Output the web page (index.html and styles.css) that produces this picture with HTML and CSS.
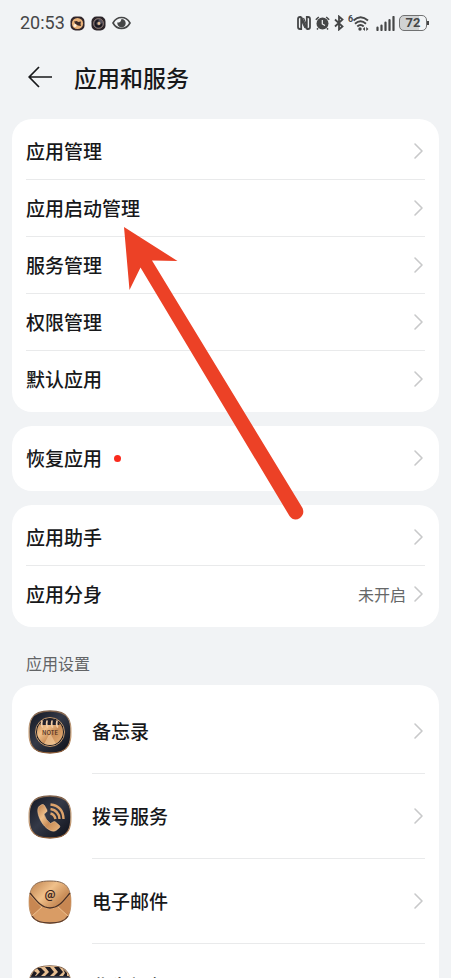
FILE: index.html
```
<!DOCTYPE html>
<html lang="zh-CN">
<head>
  <meta charset="UTF-8">
  <meta name="viewport" content="width=device-width, initial-scale=1.0">
  <title>应用和服务</title>
  <link rel="stylesheet" href="styles.css">
</head>
<body>
  <svg class="defs" width="0" height="0" aria-hidden="true">
    <defs>
      <linearGradient id="gold" x1="0" y1="0" x2="1" y2="1">
        <stop offset="0" stop-color="#b87c4a"/>
        <stop offset="0.35" stop-color="#f0c08a"/>
        <stop offset="0.6" stop-color="#c98d58"/>
        <stop offset="1" stop-color="#e8b47c"/>
      </linearGradient>
      <linearGradient id="rim" x1="0" y1="0" x2="0" y2="1">
        <stop offset="0" stop-color="#7d5f49"/>
        <stop offset="0.5" stop-color="#d9b48e"/>
        <stop offset="1" stop-color="#8a5a35"/>
      </linearGradient>
      <linearGradient id="dark" x1="0" y1="0" x2="1" y2="1">
        <stop offset="0" stop-color="#121520"/>
        <stop offset="0.45" stop-color="#343947"/>
        <stop offset="1" stop-color="#0d0f18"/>
      </linearGradient>
      <symbol id="chevron" viewBox="0 0 12 18">
        <path d="M2 2l7 7-7 7" fill="none" stroke="#c8c9ca" stroke-width="1.6" stroke-linecap="round" stroke-linejoin="round"/>
      </symbol>
      <path id="tile" d="M22 1C32 1 37 3 40 8C44 14 44 30 40 36C37 41 32 43 22 43C12 43 7 41 4 36C0 30 0 14 4 8C7 3 12 1 22 1Z"/>
    </defs>
  </svg>

  <div class="screen">
    <div class="status-bar">
      <div class="status-left">
        <span class="time">20:53</span>
        <svg width="15" height="15" viewBox="0 0 15 15">
          <rect x="0.5" y="0.5" width="14" height="14" rx="5" fill="#30252a"/>
          <circle cx="7.5" cy="7.5" r="5.6" fill="#e9b27a"/>
          <path d="M4 5.500l3-.5 1 1 3-.5-.5 2.500.5 2-3-.5L5.500 8z" fill="#3b2a28"/>
          <circle cx="5" cy="9.5" r="1.5" fill="#fff0dc"/>
        </svg>
        <svg class="second-app" width="15" height="15" viewBox="0 0 15 15">
          <rect x="0.5" y="0.5" width="14" height="14" rx="5" fill="#2b2429"/>
          <circle cx="7.5" cy="7.5" r="5" fill="#55515c" stroke="#9b8377" stroke-width="0.8"/>
          <path d="M7.5 4.5a3 3 0 1 0 3 3" fill="none" stroke="#19171e" stroke-width="1.8"/>
          <circle cx="8" cy="7.5" r="1.4" fill="#e3bd94"/>
        </svg>
        <svg width="19" height="14" viewBox="0 0 19 14">
          <path d="M1 7C5-.3 14-.3 18 7C14 14.3 5 14.3 1 7Z" fill="none" stroke="#454647" stroke-width="1.6"/>
          <path d="M9.500 3A4.200 4.200 0 1 1 5.400 6.300Q8.400 7.500 9.500 3Z" fill="#454647"/>
        </svg>
      </div>
      <div class="status-right">
        <svg width="14" height="14" viewBox="0 0 14 14" fill="none" stroke="#454647" stroke-width="1.8">
          <path d="M4.200 1H3Q1 1 1 3V11Q1 13 3 13H4.200V1L9.800 13V1H11Q13 1 13 3V11Q13 13 11 13H9.800"/>
          <path d="M4.500 4.500L8 12M6.500 2L9.500 9" stroke-width="1.200"/>
        </svg>
        <svg width="15" height="14" viewBox="0 0 15 14">
          <circle cx="7.500" cy="7.500" r="6" fill="#454647"/>
          <path d="M.8 3.800L3.800 1M14.200 3.800L11.200 1M3 12.200L2 13.500M12 12.200L13 13.500" stroke="#454647" stroke-width="1.500"/>
          <path d="M7.300 4v4l2.700 1.500" fill="none" stroke="#f1f3f5" stroke-width="1.200"/>
        </svg>
        <svg width="10" height="16" viewBox="0 0 10 16">
          <path d="M1 4.500L8.500 11.500L5 14.500V1.500L8.500 4.500L1 11.500" fill="none" stroke="#454647" stroke-width="1.800"/>
        </svg>
        <svg class="wifi" width="21" height="16" viewBox="0 0 21 16">
          <text x="0" y="7" font-size="9" font-weight="700" fill="#454647">6</text>
          <g fill="none" stroke="#454647" stroke-width="1.900">
            <path d="M5.500 5.500Q12.500 -1 20 5.500M7 8.700Q12.500 4 18 8.700M9.300 11.500Q12.500 8.500 15.700 11.500"/>
          </g>
          <circle cx="12" cy="14" r="1.700" fill="#454647"/>
          <path d="M14.700 14l2.300-2v4zM20.500 14l-2.300-2v4z" fill="#454647"/>
        </svg>
        <svg width="19" height="15" viewBox="0 0 19 15">
          <path d="M1.500 11.500V14M5.500 9.500V14M9.500 6.500V14M13.500 4V14M17.500 1V14" stroke="#454647" stroke-width="2.200" stroke-linecap="round"/>
        </svg>
        <span class="battery">72</span>
      </div>
    </div>

    <header class="title-bar">
      <button class="back" type="button" aria-label="返回">
        <svg width="24" height="24" viewBox="0 0 24 24">
          <path d="M24 12H1.500M11 2L1.200 12L11 22" fill="none" stroke="#17181a" stroke-width="1.700"/>
        </svg>
      </button>
      <h1>应用和服务</h1>
    </header>

    <main>
      <nav class="card">
        <a class="row" href="#"><span>应用管理</span><svg class="chevron"><use href="#chevron"/></svg></a>
        <a class="row" href="#"><span>应用启动管理</span><svg class="chevron"><use href="#chevron"/></svg></a>
        <a class="row" href="#"><span>服务管理</span><svg class="chevron"><use href="#chevron"/></svg></a>
        <a class="row" href="#"><span>权限管理</span><svg class="chevron"><use href="#chevron"/></svg></a>
        <a class="row" href="#"><span>默认应用</span><svg class="chevron"><use href="#chevron"/></svg></a>
      </nav>

      <nav class="card">
        <a class="row" href="#"><span>恢复应用</span><i class="dot"></i><svg class="chevron"><use href="#chevron"/></svg></a>
      </nav>

      <nav class="card">
        <a class="row" href="#"><span>应用助手</span><svg class="chevron"><use href="#chevron"/></svg></a>
        <a class="row" href="#"><span>应用分身</span><span class="value">未开启</span><svg class="chevron"><use href="#chevron"/></svg></a>
      </nav>

      <h2>应用设置</h2>
      <nav class="card">
        <a class="app" href="#">
          <svg class="app-icon" viewBox="0 0 44 44">
            <use href="#tile" fill="url(#dark)" stroke="url(#rim)" stroke-width="1.300"/>
            <circle cx="22" cy="22" r="14.500" fill="#151721" stroke="#c69a6f" stroke-width="1"/>
            <circle cx="22" cy="22" r="13" fill="url(#gold)"/>
            <path d="M22 23L16 34Q22 36 28 34Z" fill="#ffdcae" opacity="0.500"/>
            <path d="M12.500 13Q22 4 31.500 13V15H12.500Z" fill="#20202a"/>
            <path d="M14 11q-1 4 .5 6M19 11q-1 4 .5 6M24 11q-1 4 .5 6M29 11q-1 4 .5 6" fill="none" stroke="#f2cca4" stroke-width="1.600" stroke-linecap="round"/>
            <text x="22" y="25" text-anchor="middle" font-size="6" font-weight="500" fill="#4a2c1c">NOTE</text>
          </svg>
          <span class="app-name">备忘录<svg class="chevron"><use href="#chevron"/></svg></span>
        </a>
        <a class="app" href="#">
          <svg class="app-icon" viewBox="0 0 44 44">
            <use href="#tile" fill="url(#dark)" stroke="url(#rim)" stroke-width="1.300"/>
            <path d="M11.500 11L14 9.500Q15.500 9 16.500 10.500L19 15Q19.500 16.500 18 17.500L16 19Q17.500 25 22.500 28.500L25 27Q26.500 26 27.500 27L31.500 30.500Q32.500 32 31 33L28 35.500C24 38 17 33 13.500 27C9.500 20 8.500 13.500 11.500 11Z" fill="url(#gold)" stroke="#ffd3a3" stroke-width="0.500"/>
            <path d="M22.500 18.500Q26.500 19.500 27.500 24M22.500 14Q31 15.500 31.500 24M22.500 9.500Q35 11 35.500 24" fill="none" stroke="#dda36b" stroke-width="2.400"/>
          </svg>
          <span class="app-name">拨号服务<svg class="chevron"><use href="#chevron"/></svg></span>
        </a>
        <a class="app" href="#">
          <svg class="app-icon" viewBox="0 0 44 44">
            <use href="#tile" fill="url(#gold)" stroke="url(#rim)" stroke-width="1"/>
            <path d="M1.500 15L14 28L4 36Q0 27 1.500 15ZM42.500 15L30 28L40 36Q44 27 42.500 15Z" fill="#c88752"/>
            <path d="M4 36L15 26Q22 31 29 26L40 36Q36 43 22 43Q8 43 4 36Z" fill="#d99c65" stroke="#f4cb9c" stroke-width="0.800"/>
            <path d="M2 13C8 20 13 28 22 28C31 28 36 20 42 13" fill="none" stroke="#4b3025" stroke-width="1.300"/>
            <path d="M4 36Q8 43 22 43Q36 43 40 36" fill="none" stroke="#593a2b" stroke-width="1.300"/>
            <text x="22" y="19" text-anchor="middle" font-size="11" font-weight="600" fill="#39241d">@</text>
          </svg>
          <span class="app-name">电子邮件<svg class="chevron"><use href="#chevron"/></svg></span>
        </a>
        <a class="app" href="#">
          <svg class="app-icon" viewBox="0 0 44 44">
            <use href="#tile" fill="url(#dark)" stroke="url(#rim)" stroke-width="1.300"/>
            <path d="M3 11Q6 1 22 1Q38 1 41 11Z" fill="#e5bd91"/>
            <path d="M9 3h4l4 4-4 4H8l4-4zM17 2h5l4 5-4 4h-5l4-4zM26 2h5l4 5-4 4h-5l4-4zM35 4l4 4v3h-4l2-3zM3 11l3-5 3 2-2 3z" fill="#1b1920"/>
            <path d="M2 12H42V17H2Z" fill="#545762"/>
            <path d="M17 20L30 27L17 34Z" fill="url(#gold)"/>
          </svg>
          <span class="app-name">华为视频<svg class="chevron"><use href="#chevron"/></svg></span>
        </a>
      </nav>
    </main>

    <svg class="pointer" width="56" height="294" viewBox="0 0 56 294" aria-hidden="true">
      <path d="M0 0L53.500 34L28 33.500L178.500 281Q181 287 176 291Q170 295 165.500 289L16.500 40.500L5.500 63Z" fill="#ec4126"/>
    </svg>
  </div>
</body>
</html>
```
FILE: styles.css
```
* {
  box-sizing: border-box;
}
body {
  margin: 0;
  background: #f1f3f5;
  color: #17181a;
  font-family: "Noto Sans CJK SC", sans-serif;
}
svg {
  display: block;
  flex-shrink: 0;
}
.defs {
  position: absolute;
}
.screen {
  position: relative;
  height: 100vh;
  overflow: hidden;
}

/* status bar */
.status-bar {
  display: flex;
  justify-content: space-between;
  align-items: center;
  height: 46px;
  padding: 0 24px 0 20px;
  color: #454647;
  font-family: Roboto, sans-serif;
}
.status-left,
.status-right {
  display: flex;
  align-items: center;
  gap: 5px;
}
.status-right {
  gap: 4px;
}
.second-app {
  margin: 0 1px;
}
.time {
  font-size: 18px;
  line-height: 24px;
}
.wifi {
  margin-right: 3px;
}
.battery {
  position: relative;
  width: 28px;
  height: 16px;
  border: 1px solid #707172;
  border-radius: 5px;
  background: linear-gradient(to right, #d0d2d3 72%, #f1f3f5 72%);
  font-size: 13px;
  font-weight: 700;
  line-height: 14px;
  text-align: center;
}
.battery::after {
  content: "";
  position: absolute;
  top: 5px;
  right: -3px;
  width: 2px;
  height: 4px;
  background: #454647;
}

/* title */
.title-bar {
  display: flex;
  align-items: center;
  gap: 22px;
  height: 62px;
  padding: 0 28px;
}
.back {
  padding: 0;
  border: none;
  background: none;
  cursor: pointer;
}
h1 {
  margin: 0;
  font-size: 23px;
  font-weight: 500;
  line-height: 32px;
}

/* lists */
main {
  padding: 11px 12px;
}
.card {
  margin-bottom: 14px;
  padding: 4px 14px;
  border-radius: 20px;
  background: #fff;
}
.row,
.app {
  display: flex;
  align-items: center;
  color: inherit;
  font-size: 19px;
  font-weight: 500;
  line-height: 28px;
  text-decoration: none;
}
.row {
  height: 57px;
  border-bottom: 1px solid #e9eaeb;
}
.row:last-child {
  border-bottom-color: transparent;
}
.chevron {
  width: 12px;
  height: 18px;
  margin-left: auto;
}
.dot {
  width: 7px;
  height: 7px;
  margin-left: 12px;
  border-radius: 50%;
  background: #fa2a1d;
}
.value {
  margin-left: auto;
  color: #666768;
  font-size: 16px;
  font-weight: 400;
}
.value + .chevron {
  margin-left: 7px;
}
h2 {
  margin: 0;
  padding: 10px 14px;
  color: #626466;
  font-size: 16px;
  font-weight: 400;
  line-height: 24px;
}
.app {
  gap: 20px;
  padding-left: 2px;
}
.app-icon {
  width: 44px;
  height: 44px;
}
.app-name {
  display: flex;
  flex: 1;
  align-items: center;
  height: 85px;
  border-bottom: 1px solid #e9eaeb;
}

/* pointer drawn over the list */
.pointer {
  position: absolute;
  top: 227px;
  left: 124px;
  overflow: visible;
  pointer-events: none;
}
```
